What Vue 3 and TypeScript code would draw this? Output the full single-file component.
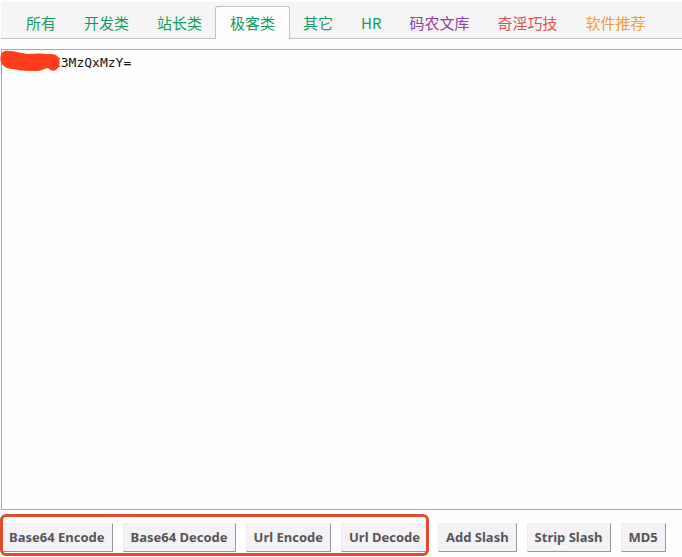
<script setup lang="ts">
import { ref } from 'vue'

interface Tab {
  label: string
  tone: string
}

const tabs: Tab[] = [
  { label: '所有', tone: 'green' },
  { label: '开发类', tone: 'green' },
  { label: '站长类', tone: 'green' },
  { label: '极客类', tone: 'green' },
  { label: '其它', tone: 'green' },
  { label: 'HR', tone: 'green' },
  { label: '码农文库', tone: 'purple' },
  { label: '奇淫巧技', tone: 'red' },
  { label: '软件推荐', tone: 'orange' },
]
const active = ref('极客类')
const text = ref('      I3MzQxMzY=')

const codecActions: string[] = ['Base64 Encode', 'Base64 Decode', 'Url Encode', 'Url Decode']
const otherActions: string[] = ['Add Slash', 'Strip Slash', 'MD5']
</script>

<template>
  <div class="page">
    <nav class="tabs">
      <a
        v-for="tab in tabs"
        :key="tab.label"
        href="#"
        class="tab"
        :class="[tab.tone, { active: tab.label === active }]"
        @click.prevent="active = tab.label"
      >{{ tab.label }}</a>
    </nav>

    <div class="editor">
      <textarea v-model="text" class="input" aria-label="Text" spellcheck="false"></textarea>
      <svg class="scribble" width="62" height="24" viewBox="0 0 62 24" aria-hidden="true">
        <path
          d="M1 6 C2 2 5 1 9 2 C15 2 20 4 27 5 C33 5 39 4 45 5 C51 5 56 4 59 9 C60 13 60 18 57 20 C54 23 51 22 48 19 C44 19 43 22 37 22 C28 22 20 22 14 20 C8 20 4 18 2 15 C0 12 0 9 1 6 Z"
          fill="#ff3d1c"
        />
      </svg>
    </div>

    <div class="actions">
      <div class="group marked">
        <button v-for="name in codecActions" :key="name" type="button" class="btn">{{ name }}</button>
      </div>
      <div class="group">
        <button v-for="name in otherActions" :key="name" type="button" class="btn">{{ name }}</button>
      </div>
    </div>
  </div>
</template>

<style>
body {
  margin: 0;
  background: #fefefe;
}
</style>

<style scoped>
.page {
  box-sizing: border-box;
  display: flex;
  flex-direction: column;
  min-height: 100vh;
  padding: 2px 0 1px 1px;
}

.tabs {
  display: flex;
  align-items: flex-end;
  height: 36px;
  padding-left: 12px;
  background: #f5f5f5;
  border-bottom: 1px solid #c2c0c2;
}

.tab {
  box-sizing: border-box;
  height: 32px;
  margin-left: -2px;
  padding: 0 14px;
  border: 1px solid transparent;
  border-bottom: 0;
  font: 15px/31px "Noto Sans CJK SC", sans-serif;
  white-space: nowrap;
  text-decoration: none;
}

.tab.active {
  height: 33px;
  margin-bottom: -1px;
  background: #fefefe;
  border-color: #c2c0c2;
  border-radius: 3px 3px 0 0;
}

.green {
  color: #169b61;
}

.purple {
  color: #8e3fa8;
}

.red {
  color: #e05353;
}

.orange {
  color: #eba03f;
}

.editor {
  position: relative;
  display: flex;
  flex: 1;
  margin-top: 10px;
}

.input {
  box-sizing: border-box;
  flex: 1;
  min-width: 0;
  margin: 0;
  padding: 4px;
  border: 1px solid #a9a7a9;
  border-right: 0;
  border-radius: 0;
  outline: 0;
  resize: none;
  background: #fefefe;
  color: #111;
  font: 13px/18px "DejaVu Sans Mono", monospace;
}

.scribble {
  position: absolute;
  top: 0;
  left: -1px;
}

.actions {
  display: flex;
  gap: 10px;
  padding-top: 4px;
}

.group {
  display: flex;
  gap: 10px;
  padding: 9px 0 4px;
}

.marked {
  position: relative;
}

.marked::after {
  content: "";
  position: absolute;
  inset: 0 -1px 0 -1px;
  border: 3px solid #e04a2f;
  border-radius: 6px;
  pointer-events: none;
}

.btn {
  height: 29px;
  margin: 0;
  padding: 0 7px;
  border: 1px solid #eeecee;
  border-right-color: #9a989a;
  border-bottom-color: #9a989a;
  border-radius: 0;
  background: #f4f2f5;
  color: #555;
  font: bold 13px/27px "Noto Sans", sans-serif;
  white-space: nowrap;
}
</style>
